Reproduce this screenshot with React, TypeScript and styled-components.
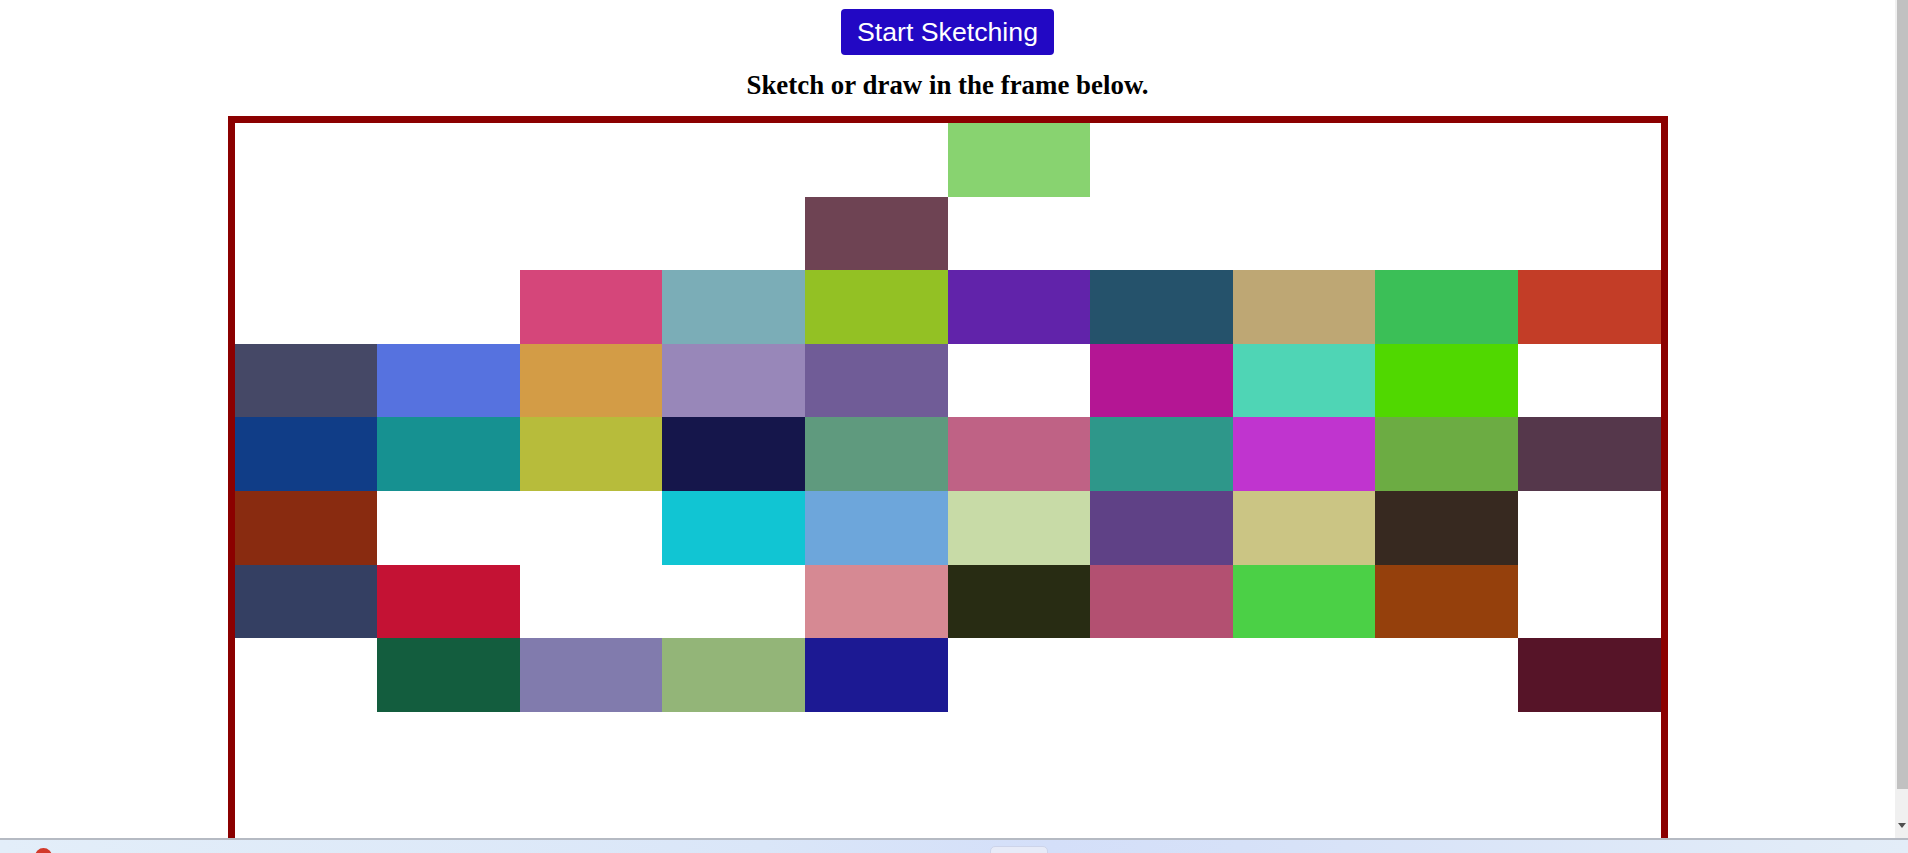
import React from "react";
import styled, { createGlobalStyle } from "styled-components";

const GlobalStyle = createGlobalStyle`
  html, body {
    margin: 0;
    padding: 0;
    background: #ffffff;
    overflow: hidden;
    height: 100%;
  }
  body {
    font-family: "Liberation Serif", "Times New Roman", serif;
  }
`;

const Page = styled.div`
  width: calc(100vw - 13px);
  display: flex;
  flex-direction: column;
  align-items: center;
  padding-top: 9px;
`;

const StartButton = styled.button`
  width: 213px;
  height: 46px;
  padding: 0;
  border: none;
  border-radius: 4px;
  background: #2208c4;
  color: #ffffff;
  font-family: "Liberation Sans", Arial, sans-serif;
  font-size: 26.7px;
  line-height: 46px;
  cursor: pointer;
`;

const Title = styled.h2`
  margin: 15px 0 0 0;
  font-family: "Liberation Serif", "Times New Roman", serif;
  font-weight: bold;
  font-size: 26.9px;
  line-height: 30px;
  color: #000000;
`;

const Frame = styled.div`
  margin-top: 16px;
  width: 1426px;
  border: 7px solid #8b0000;
  background: #ffffff;
  display: grid;
  grid-template-columns: repeat(10, 1fr);
  grid-template-rows: repeat(10, 73.6px);
`;

const Cell = styled.div<{ $color: string | null }>`
  background: ${(p) => p.$color ?? "transparent"};
`;

const Taskbar = styled.div`
  position: fixed;
  left: 0;
  right: 0;
  bottom: 0;
  height: 13px;
  border-top: 2px solid #b5bac3;
  background: linear-gradient(
    90deg,
    #e3eef9 0%,
    #dae6f8 40%,
    #d4dff9 55%,
    #d6e1f8 65%,
    #e3edf8 100%
  );
  display: flex;
  align-items: flex-start;
  padding-left: 35px;
  gap: 938px;
  overflow: hidden;
`;

const RedDot = styled.div`
  margin-top: 8px;
  flex: none;
  width: 17px;
  height: 17px;
  border-radius: 50%;
  background: #d2392a;
`;

const TaskTab = styled.div`
  margin-top: 6px;
  flex: none;
  width: 56px;
  height: 20px;
  border-radius: 5px;
  background: #e7ebf8;
  border: 1px solid #cdd4ea;
`;

const ScrollTrack = styled.div`
  position: fixed;
  right: 0;
  top: 0;
  width: 13px;
  height: 838px;
  background: #f0f0f0;
  display: flex;
  flex-direction: column;
  align-items: flex-end;
`;

const ScrollThumb = styled.div`
  width: 11px;
  height: 789px;
  background: #c1c1c1;
`;

const ScrollArrow = styled.div`
  margin-top: 34px;
  margin-right: 2px;
  width: 0;
  height: 0;
  border-left: 4px solid transparent;
  border-right: 4px solid transparent;
  border-top: 5px solid #505050;
`;

const _ = null;
const grid: (string | null)[][] = [
  [_, _, _, _, _, "#88d370", _, _, _, _],
  [_, _, _, _, "#6e4353", _, _, _, _, _],
  [_, _, "#d5467a", "#7badb7", "#93c124", "#6123aa", "#25526b", "#bea774", "#3bbf57", "#c33d27"],
  ["#454866", "#5672df", "#d39c46", "#9887b9", "#705c97", _, "#b41694", "#4fd5b5", "#50d800", _],
  ["#103d87", "#169191", "#b7bc3b", "#15164b", "#5f9a7e", "#bf6285", "#2e978a", "#c034cf", "#6cac43", "#55374b"],
  ["#892b10", _, _, "#11c5d3", "#6da6db", "#c8dba7", "#5f4186", "#cbc584", "#372920", _],
  ["#343f62", "#c41234", _, _, "#d68993", "#282c13", "#b35071", "#4bd046", "#95400c", _],
  [_, "#135d3e", "#817bad", "#93b578", "#1c1993", _, _, _, _, "#561428"],
  [_, _, _, _, _, _, _, _, _, _],
  [_, _, _, _, _, _, _, _, _, _],
];

export default function App() {
  return (
    <>
      <GlobalStyle />
      <Page>
        <StartButton>Start Sketching</StartButton>
        <Title>Sketch or draw in the frame below.</Title>
        <Frame>
          {grid.flatMap((row, r) =>
            row.map((c, i) => <Cell key={`${r}-${i}`} $color={c} />)
          )}
        </Frame>
      </Page>
      <ScrollTrack>
        <ScrollThumb />
        <ScrollArrow />
      </ScrollTrack>
      <Taskbar>
        <RedDot />
        <TaskTab />
      </Taskbar>
    </>
  );
}
